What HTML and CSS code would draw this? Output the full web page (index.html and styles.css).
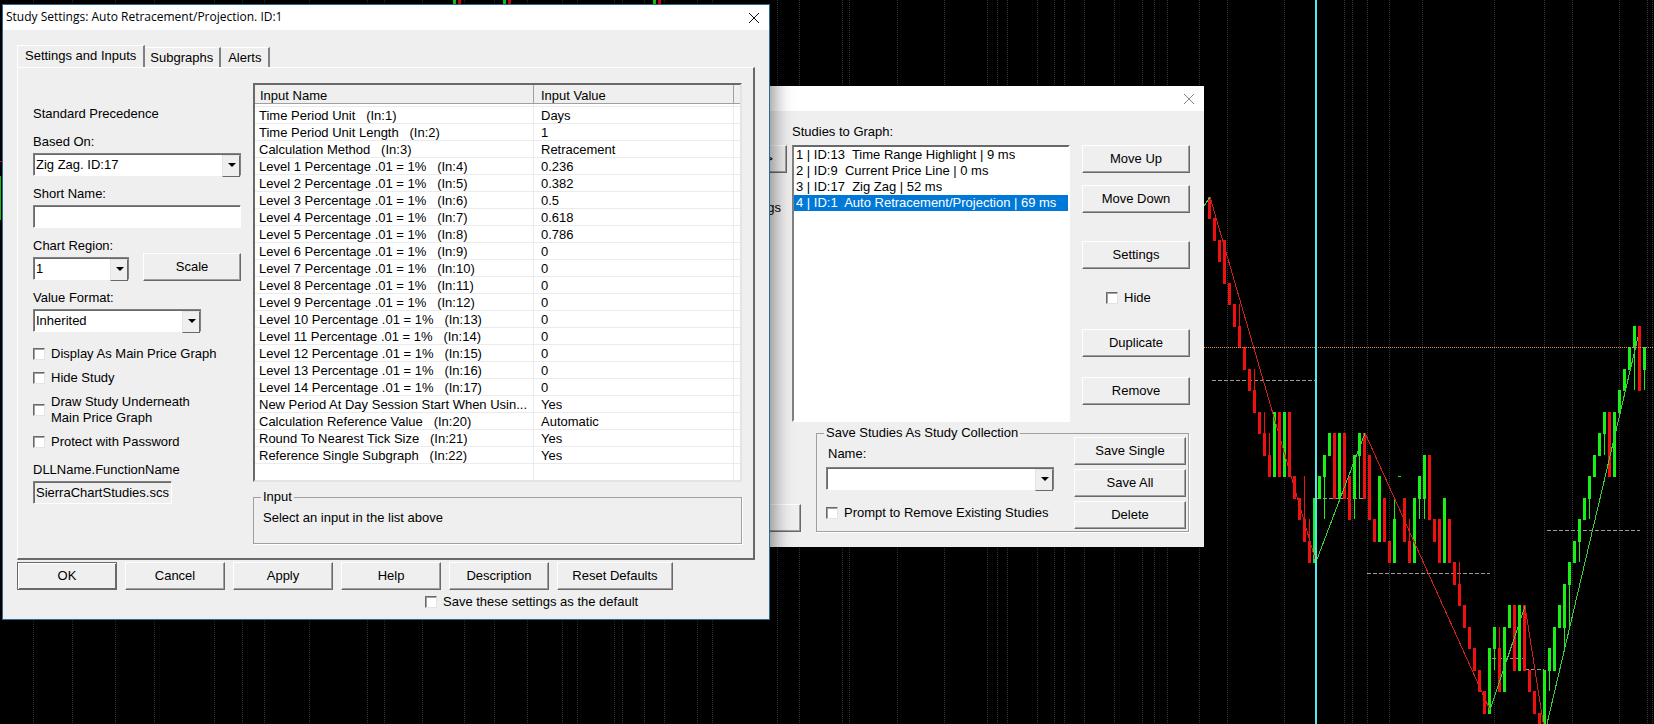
FILE: index.html
```html
<!DOCTYPE html>
<html lang="en">
<head>
	<title>Study Settings</title>
	<meta charset="UTF-8">
	<link rel="stylesheet" href="styles.css">
</head>
<body>
	<svg class="chart" id="chart" viewBox="0 0 1654 724" preserveAspectRatio="xMinYMin slice" shape-rendering="crispEdges"></svg>

	<!-- Chart studies window -->
	<section class="window studies">
		<header class="titlebar">
			<button type="button" class="close" aria-label="Close">
				<svg width="12" height="12" viewBox="0 0 12 12"><path d="M1 1L11 11M11 1L1 11"/></svg>
			</button>
		</header>
		<div class="studies-body">
			<div class="available">
				<button type="button" class="btn add">&gt;</button>
				<span class="available-text">Settings</span>
				<button type="button" class="btn bottom" aria-label="OK"></button>
			</div>
			<div class="graphed">
				<div class="graphed-top">
					<div class="study-column">
						<label for="study-list">Studies to Graph:</label>
						<select id="study-list" class="study-list" size="17">
							<option>1 | ID:13&nbsp; Time Range Highlight | 9 ms</option>
							<option>2 | ID:9&nbsp; Current Price Line | 0 ms</option>
							<option>3 | ID:17&nbsp; Zig Zag | 52 ms</option>
							<option class="current">4 | ID:1&nbsp; Auto Retracement/Projection | 69 ms</option>
						</select>
					</div>
					<div class="actions">
						<button type="button" class="btn">Move Up</button>
						<button type="button" class="btn">Move Down</button>
						<button type="button" class="btn settings">Settings</button>
						<label class="check hide"><input type="checkbox"> Hide</label>
						<button type="button" class="btn">Duplicate</button>
						<button type="button" class="btn remove">Remove</button>
					</div>
				</div>
				<fieldset class="collection">
					<legend>Save Studies As Study Collection</legend>
					<div class="collection-form">
						<label for="collection-name">Name:</label>
						<div class="combo">
							<select id="collection-name"><option></option></select>
						</div>
						<label class="check"><input type="checkbox"> Prompt to Remove Existing Studies</label>
					</div>
					<div class="collection-buttons">
						<button type="button" class="btn">Save Single</button>
						<button type="button" class="btn">Save All</button>
						<button type="button" class="btn">Delete</button>
					</div>
				</fieldset>
			</div>
		</div>
	</section>

	<!-- Study settings window -->
	<section class="window study-settings">
		<header class="titlebar">
			<h1>Study Settings: Auto Retracement/Projection. ID:1</h1>
			<button type="button" class="close" aria-label="Close">
				<svg width="12" height="12" viewBox="0 0 12 12"><path d="M1 1L11 11M11 1L1 11"/></svg>
			</button>
		</header>
		<div class="settings-body">
			<nav class="tabs">
				<button type="button" class="tab active">Settings and Inputs</button>
				<button type="button" class="tab">Subgraphs</button>
				<button type="button" class="tab">Alerts</button>
			</nav>
			<div class="panel">
				<div class="options">
					<p class="precedence">Standard Precedence</p>
					<div class="field">
						<label for="based-on">Based On:</label>
						<div class="combo">
							<select id="based-on"><option>Zig Zag. ID:17</option></select>
						</div>
					</div>
					<div class="field">
						<label for="short-name">Short Name:</label>
						<input type="text" id="short-name" class="text">
					</div>
					<div class="field-row">
						<div class="field region">
							<label for="region">Chart Region:</label>
							<div class="combo">
								<select id="region"><option>1</option></select>
							</div>
						</div>
						<button type="button" class="btn scale">Scale</button>
					</div>
					<div class="field format">
						<label for="format">Value Format:</label>
						<div class="combo">
							<select id="format"><option>Inherited</option></select>
						</div>
					</div>
					<div class="checks">
						<label class="check"><input type="checkbox"> Display As Main Price Graph</label>
						<label class="check"><input type="checkbox"> Hide Study</label>
						<label class="check"><input type="checkbox"> <span>Draw Study Underneath<br>Main Price Graph</span></label>
						<label class="check"><input type="checkbox"> Protect with Password</label>
					</div>
					<div class="field dll">
						<label for="dll">DLLName.FunctionName</label>
						<input type="text" id="dll" class="text" value="SierraChartStudies.scsf_AutoRetracement" readonly>
					</div>
				</div>

				<div class="inputs">
					<div class="list">
						<table>
							<thead>
								<tr><th class="name">Input Name</th><th class="value">Input Value</th><th></th></tr>
							</thead>
							<tbody>
								<tr class="spacer"><td></td><td></td><td></td></tr>
								<tr><td>Time Period Unit   (In:1)</td><td>Days</td><td></td></tr>
								<tr><td>Time Period Unit Length   (In:2)</td><td>1</td><td></td></tr>
								<tr><td>Calculation Method   (In:3)</td><td>Retracement</td><td></td></tr>
								<tr><td>Level 1 Percentage .01 = 1%   (In:4)</td><td>0.236</td><td></td></tr>
								<tr><td>Level 2 Percentage .01 = 1%   (In:5)</td><td>0.382</td><td></td></tr>
								<tr><td>Level 3 Percentage .01 = 1%   (In:6)</td><td>0.5</td><td></td></tr>
								<tr><td>Level 4 Percentage .01 = 1%   (In:7)</td><td>0.618</td><td></td></tr>
								<tr><td>Level 5 Percentage .01 = 1%   (In:8)</td><td>0.786</td><td></td></tr>
								<tr><td>Level 6 Percentage .01 = 1%   (In:9)</td><td>0</td><td></td></tr>
								<tr><td>Level 7 Percentage .01 = 1%   (In:10)</td><td>0</td><td></td></tr>
								<tr><td>Level 8 Percentage .01 = 1%   (In:11)</td><td>0</td><td></td></tr>
								<tr><td>Level 9 Percentage .01 = 1%   (In:12)</td><td>0</td><td></td></tr>
								<tr><td>Level 10 Percentage .01 = 1%   (In:13)</td><td>0</td><td></td></tr>
								<tr><td>Level 11 Percentage .01 = 1%   (In:14)</td><td>0</td><td></td></tr>
								<tr><td>Level 12 Percentage .01 = 1%   (In:15)</td><td>0</td><td></td></tr>
								<tr><td>Level 13 Percentage .01 = 1%   (In:16)</td><td>0</td><td></td></tr>
								<tr><td>Level 14 Percentage .01 = 1%   (In:17)</td><td>0</td><td></td></tr>
								<tr><td>New Period At Day Session Start When Usin...</td><td>Yes</td><td></td></tr>
								<tr><td>Calculation Reference Value   (In:20)</td><td>Automatic</td><td></td></tr>
								<tr><td>Round To Nearest Tick Size   (In:21)</td><td>Yes</td><td></td></tr>
								<tr><td>Reference Single Subgraph   (In:22)</td><td>Yes</td><td></td></tr>
								<tr><td></td><td></td><td></td></tr>
							</tbody>
						</table>
					</div>
					<fieldset class="hint">
						<legend>Input</legend>
						<p>Select an input in the list above</p>
					</fieldset>
				</div>
			</div>
			<footer class="buttons">
				<button type="button" class="btn default">OK</button>
				<button type="button" class="btn">Cancel</button>
				<button type="button" class="btn">Apply</button>
				<button type="button" class="btn">Help</button>
				<button type="button" class="btn">Description</button>
				<button type="button" class="btn reset">Reset Defaults</button>
			</footer>
			<label class="check save-default"><input type="checkbox"> Save these settings as the default</label>
		</div>
	</section>

	<script>

		var chart = document.getElementById('chart');

		// x of the vertical grid lines
		var grid = [33, 72, 115, 154, 214, 242, 264, 309, 367, 384, 422, 464, 494, 527, 562, 577, 614, 622, 644, 664, 697, 712,
			777, 799, 842, 849, 897, 944, 987, 997, 1007, 1037, 1054, 1064, 1084, 1114, 1142, 1154, 1167, 1199,
			1227, 1284, 1344, 1352, 1367, 1389, 1422, 1494, 1544, 1572, 1619, 1647, 1652];

		// color, body top, body bottom, wick top, wick bottom (in ticks)
		var candles = [
			['r', 0, 1], ['r', 1, 2], ['r', 2, 3], ['r', 2, 4], ['r', 4, 5], ['r', 5, 6], ['r', 6, 7, 5, 7], ['r', 7, 8],
			['r', 8, 9], ['r', 9, 10, 8, 10], ['r', 10, 11], ['r', 11, 12, 10, 12], ['r', 12, 13, 11, 13], ['g', 10, 13],
			['r', 10, 13], ['g', 10, 13], ['r', 10, 13], ['r', 13, 14], ['r', 14, 15], ['r', 15, 16, 13, 16],
			['r', 16, 17, 15, 17], ['g', 14, 17], ['g', 13, 14], ['g', 12, 13, 12, 15], ['g', 11, 12], ['r', 11, 14],
			['g', 11, 14], ['r', 11, 14], ['r', 13, 15], ['g', 12, 14, 12, 15], ['g', 11, 12, 11, 14], ['r', 11, 14],
			['r', 12, 15], ['r', 15, 16], ['g', 13, 16], ['r', 14, 16], ['r', 16, 17], ['g', 15, 17, 14, 17],
			['g', 13, 13], ['r', 14, 16], ['r', 16, 17, 15, 17], ['g', 14, 17], ['g', 13, 14, 13, 15], ['g', 12, 14, 12, 15],
			['r', 12, 15], ['r', 15, 16], ['r', 15, 17], ['g', 14, 17], ['r', 15, 17], ['r', 17, 18],
			['r', 18, 19, 17, 19], ['r', 19, 20], ['r', 20, 21], ['r', 21, 22], ['r', 22, 23], ['r', 23, 24],
			['g', 21, 24], ['g', 20, 21, 20, 22], ['r', 21, 23, 20, 23], ['g', 20, 23], ['g', 19, 20], ['r', 19, 22],
			['g', 19, 22], ['r', 19, 22], ['r', 22, 23], ['r', 23, 24], ['r', 24, 25], ['g', 22, 25],
			['g', 21, 22, 21, 23], ['g', 20, 22], ['g', 19, 20], ['g', 18, 20, 18, 21], ['g', 17, 18, 17, 20], ['g', 16, 17],
			['g', 15, 16, 15, 17], ['g', 14, 15], ['g', 13, 14, 13, 15], ['g', 12, 13], ['g', 11, 12], ['g', 10, 11, 10, 12],
			['r', 10, 13], ['g', 10, 13], ['g', 9, 10], ['g', 8, 9], ['g', 7, 8], ['g', 6, 7, 6, 9],
			['r', 6, 9], ['g', 7, 8, 7, 9]
		];

		// x1, x2, y of the dashed levels
		var levels = [[1212, 1315, 380], [1317, 1366, 498], [1367, 1490, 573], [1492, 1524, 658], [1525, 1544, 669], [1547, 1640, 530]];

		// Zig zag segments
		var zigzag = [
			['g', 1204, 206, 1210, 197], ['r', 1210, 197, 1316, 562], ['g', 1316, 562, 1365, 433], ['r', 1365, 433, 1490, 710],
			['g', 1490, 710, 1525, 606], ['r', 1525, 606, 1544, 728], ['g', 1546, 728, 1638, 337]
		];

		// Parts of bars that show around the windows
		var edges = [['g', 453], ['r', 458], ['g', 503], ['r', 508], ['g', 653], ['r', 658]];

		function tickY(tick) {
			return Math.floor(197 + tick * 21.5);
		}

		function add(tag, className, attributes) {
			var el = document.createElementNS('http://www.w3.org/2000/svg', tag);
			el.setAttribute('class', className);
			for (var name in attributes) {
				el.setAttribute(name, attributes[name]);
			}
			chart.appendChild(el);
		}

		grid.forEach(function(x) {
			add('line', 'grid', { x1: x + 0.5, x2: x + 0.5, y1: 0, y2: 724 });
		});

		levels.forEach(function(l) {
			add('line', 'level', { x1: l[0], x2: l[1], y1: l[2] + 0.5, y2: l[2] + 0.5 });
		});

		candles.forEach(function(c, i) {
			var x = 1208 + i * 5;
			var top = tickY(c[1]);
			add('rect', 'bar ' + c[0], { x: x, y: top, width: 3, height: tickY(c[2]) - top + 1 });
			if (c.length > 3) {
				add('rect', 'bar ' + c[0], { x: x + 1, y: tickY(c[3]), width: 1, height: tickY(c[4]) - tickY(c[3]) });
			}
		});

		edges.forEach(function(e) {
			add('rect', 'bar ' + e[0], { x: e[1], y: 0, width: 3, height: 4 });
		});
		add('rect', 'bar g', { x: 0, y: 176, width: 1, height: 44 });
		add('rect', 'bar r', { x: 0, y: 161, width: 2, height: 1 });

		zigzag.forEach(function(z) {
			add('line', 'zigzag ' + z[0], { x1: z[1], y1: z[2], x2: z[3], y2: z[4] });
		});

		add('line', 'price', { x1: 1204, x2: 1654, y1: 347.5, y2: 347.5 });
		add('rect', 'marker', { x: 1315, y: 0, width: 2, height: 724 });

	</script>
</body>
</html>
```
FILE: styles.css
```css
* { box-sizing: border-box; }

body {
	margin: 0;
	height: 100vh;
	overflow: hidden;
	position: relative;
	background: #000;
	color: #000;
	font: 13px/16px "Liberation Sans", Arial, sans-serif;
}

p, h1 { margin: 0; }

button, input, select {
	font: inherit;
	color: inherit;
	margin: 0;
	border-radius: 0;
}

/* Chart */

.chart {
	display: block;
	width: 100%;
	height: 100%;
}

.grid {
	stroke: #343434;
	stroke-dasharray: 1 1;
}

.level {
	stroke: #9a9a9a;
	stroke-dasharray: 4 2;
}

.price {
	stroke: #e89048;
	stroke-dasharray: 1 1;
}

.bar.r { fill: #f01010; }
.bar.g { fill: #18f018; }

.zigzag.r { stroke: #d02020; }
.zigzag.g { stroke: #3cd03c; }

.marker { fill: #50e8ee; }

/* Windows */

.window {
	position: absolute;
	background: #efefef;
}

.titlebar {
	display: flex;
	align-items: center;
	background: #fff;
	height: 25px;
	padding: 0 9px 0 3px;
}

.titlebar h1 {
	padding-bottom: 2px;
	font: 12px/16px "Open Sans", "Noto Sans", sans-serif;
}

.close {
	display: flex;
	margin-left: auto;
	padding: 0;
	border: 0;
	background: none;
}

.close path {
	stroke: #111;
	fill: none;
}

/* Shared controls */

.btn {
	height: 28px;
	padding: 0 4px;
	background: #efefef;
	border: 1px solid;
	border-color: #fff #696969 #696969 #fff;
	box-shadow: inset -1px -1px #a0a0a0;
}

.btn.default {
	border-color: #696969;
	box-shadow: inset 1px 1px #fff, inset -1px -1px #696969;
}

.check {
	display: flex;
	align-items: center;
	gap: 6px;
}

.check input {
	appearance: none;
	width: 12px;
	height: 12px;
	background: #fff;
	border: 1px solid;
	border-color: #696969 #e3e3e3 #e3e3e3 #696969;
	outline: 0;
	box-shadow: inset 1px 1px #a0a0a0;
}

.text,
.combo select {
	appearance: none;
	display: block;
	width: 100%;
	height: 23px;
	padding: 0 2px;
	background: #fff;
	border: 1px solid;
	border-color: #808080 #fff #fff #808080;
	box-shadow: inset 1px 1px #696969;
}

.text[readonly] { background: #efefef; }

.combo { position: relative; }

.combo select { border-right-color: #808080; }

.combo::before {
	content: "";
	position: absolute;
	top: 2px;
	right: 1px;
	width: 16px;
	height: 20px;
	background: #efefef;
	border: 1px solid;
	border-color: #e3e3e3 #696969 #696969 #e3e3e3;
	pointer-events: none;
}

.combo::after {
	content: "";
	position: absolute;
	top: 10px;
	right: 5px;
	border: 4px solid transparent;
	border-top-color: #000;
	border-bottom: 0;
	pointer-events: none;
}

fieldset {
	margin: 0;
	padding: 0;
	border: 1px solid #a0a0a0;
	box-shadow: 1px 1px #fff;
}

legend {
	margin-left: 7px;
	padding: 0 2px;
}

/* Study settings */

.study-settings {
	left: 2px;
	top: 4px;
	width: 768px;
	border: 1px solid #2a6a94;
	box-shadow: 2px 0 18px 2px rgba(0, 0, 0, 0.45);
}

.settings-body {
	padding: 15px 14px 9px;
}

.tabs {
	display: flex;
	align-items: flex-end;
}

.tab {
	height: 20px;
	padding: 0 6px 0 5px;
	background: #efefef;
	border: 1px solid #fff;
	border-bottom: 0;
	border-left: 0;
	border-right: 2px solid #808080;
}

.tab.active {
	height: 22px;
	padding: 0 7px 2px;
	border-left: 1px solid #fff;
}

.tab:last-child { padding: 0 7px; }

.panel {
	display: flex;
	gap: 12px;
	padding: 15px 11px 14px 15px;
	border: 1px solid #fff;
	border-right: 2px solid #696969;
	border-bottom: 2px solid #696969;
}

.options {
	width: 208px;
	padding-top: 23px;
}

.precedence { margin-bottom: 11px; }

.field { margin-bottom: 9px; }

.field label {
	display: block;
	padding: 1px 0 3px;
}

.field-row {
	display: flex;
	justify-content: space-between;
}

.field-row .btn {
	width: 98px;
	margin-top: 16px;
}

.region { width: 96px; }

.format { width: 168px; }

.checks {
	display: flex;
	flex-direction: column;
	gap: 8px;
	padding: 5px 0 11px;
}

.dll { width: 139px; }

.inputs { flex: 1; }

.list {
	height: 399px;
	background: #fff;
	border: 2px solid;
	border-color: #696969 #e3e3e3 #e3e3e3 #696969;
	overflow: hidden;
}

.list table {
	width: 100%;
	table-layout: fixed;
	border-collapse: separate;
	border-spacing: 0;
}

.list th {
	height: 19px;
	padding: 2px 0 0 5px;
	background: #efefef;
	border-right: 1px solid #a0a0a0;
	border-bottom: 1px solid #a0a0a0;
	font-weight: normal;
	line-height: 15px;
	text-align: left;
}

.list .name { width: 279px; }

.list .value { width: 200px; }

.list td {
	height: 17px;
	padding: 1px 0 0 4px;
	border-right: 1px solid #ebebeb;
	border-bottom: 1px solid #ebebeb;
	line-height: 15px;
	white-space: pre;
}

.list th.value,
.list td:nth-child(2) { padding-left: 7px; }

.list th:last-child,
.list td:last-child { border-right: 0; }

.list .spacer td { height: 3px; }

.hint {
	height: 55px;
	margin-top: 7px;
}

.hint p { padding: 5px 9px; }

.buttons {
	display: flex;
	gap: 8px;
	margin-top: 2px;
}

.buttons .btn { width: 100px; }

.buttons .reset { width: 116px; }

.save-default { margin: 4px 0 0 408px; }

/* Chart studies */

.studies {
	left: 700px;
	top: 86px;
	width: 504px;
}

.studies .close path { stroke: #888; }

.studies-body {
	display: flex;
	padding: 12px 14px 15px 0;
}

.available {
	display: flex;
	flex-direction: column;
	align-items: flex-end;
	width: 101px;
	padding-top: 22px;
}

.available .add {
	width: 36px;
	margin-right: 14px;
}

.available-text { margin: 27px 20px 0 0; }

.available .bottom {
	width: 100px;
	margin-top: auto;
}

.graphed {
	flex: 1;
	margin-left: -9px;
}

.graphed-top {
	display: flex;
	justify-content: space-between;
}

.study-column { width: 278px; }

.study-column label {
	display: block;
	padding: 1px 0 5px;
}

.study-list {
	display: block;
	width: 100%;
	height: 277px;
	padding: 0;
	background: #fff;
	border: 2px solid;
	border-color: #696969 #fff #fff #808080;
	overflow: hidden;
}

.study-list option {
	min-height: 16px;
	padding: 0 2px;
	line-height: 16px;
}

.study-list .current {
	background: #0078d7;
	color: #fff;
}

.actions {
	display: flex;
	flex-direction: column;
	width: 108px;
	padding-top: 22px;
}

.actions .btn { margin-bottom: 12px; }

.actions .settings { margin-top: 16px; }

.actions .hide { margin: 9px 0 23px 24px; }

.actions .remove { margin: 8px 0 0; }

.collection {
	display: flex;
	justify-content: space-between;
	height: 107px;
	margin: 3px 1px 0 24px;
}

.collection-form {
	width: 228px;
	margin-left: 9px;
}

.collection-form > label { display: flex; margin: 5px 0 5px 2px; }

.collection-form > .check { margin: 15px 0 0; }

.collection-buttons {
	display: flex;
	flex-direction: column;
	gap: 4px;
	width: 112px;
	margin: -4px 2px 0 0;
}
```
